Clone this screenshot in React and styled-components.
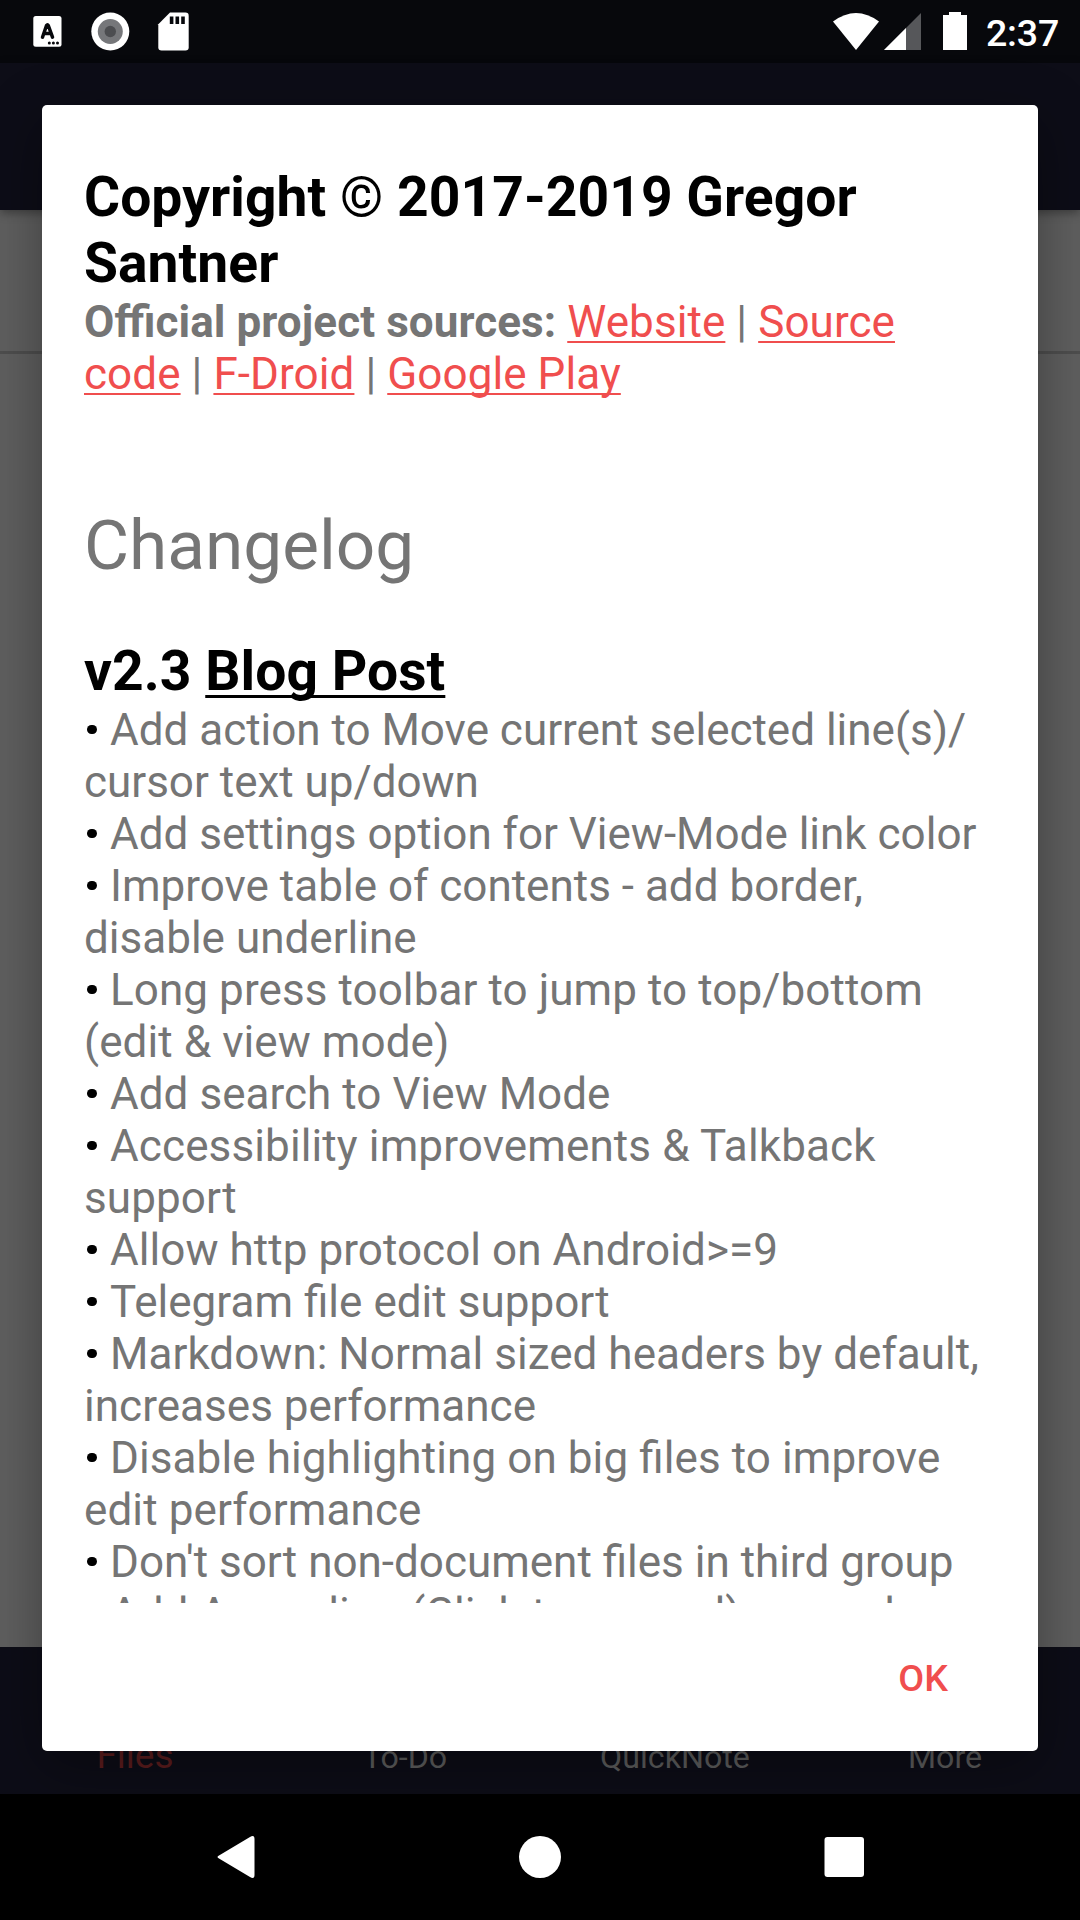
import React from 'react';
import styled, { createGlobalStyle } from 'styled-components';

const Global = createGlobalStyle`
  body { margin: 0; background: #000; font-family: Roboto, "Liberation Sans", sans-serif; }
  * { box-sizing: border-box; }
`;

const Screen = styled.div`
  position: relative;
  width: 1080px;
  height: 1920px;
  display: flex;
  flex-direction: column;
  overflow: hidden;
  background: #5f5f5f;
`;

const StatusBar = styled.header`
  height: 63px;
  flex: none;
  display: flex;
  justify-content: space-between;
  background: #07080c;
  color: #fff;
`;

const StatusIcons = styled.svg`
  display: block;
  height: 63px;
  width: ${(p) => p.$width}px;
`;

const StatusRight = styled.div`
  display: flex;
`;

const Clock = styled.span`
  width: 94px;
  padding-top: 11px;
  font-size: 37.5px;
  font-weight: 500;
  line-height: 44px;
  letter-spacing: -0.2px;
  white-space: nowrap;
`;

const Toolbar = styled.div`
  height: 147px;
  flex: none;
  background: #0d0d17;
  box-shadow: 0 3px 9px rgba(0, 0, 0, 0.35);
`;

const FileArea = styled.div`
  flex: 1;
`;

const PathRow = styled.div`
  height: 144px;
  border-bottom: 3px solid #4e4e4e;
`;

const TabBar = styled.nav`
  height: 147px;
  flex: none;
  display: grid;
  grid-template-columns: repeat(4, 1fr);
  align-items: end;
  background: #0d0d17;
`;

const Tab = styled.span`
  text-align: center;
  padding-bottom: 19px;
  font-size: ${(p) => (p.$active ? 37 : 32.2)}px;
  line-height: ${(p) => (p.$active ? 39 : 35)}px;
  color: ${(p) => (p.$active ? '#5e1d1e' : '#5e5e5e')};
`;

const SystemNav = styled.footer`
  height: 126px;
  flex: none;
  display: flex;
  background: #000;
`;

const Dialog = styled.section`
  position: absolute;
  left: 42px;
  top: 105px;
  width: 996px;
  height: 1646px;
  display: flex;
  flex-direction: column;
  padding: 59px 42px 0;
  border-radius: 5px;
  background: #fff;
  box-shadow: 0 16px 56px rgba(0, 0, 0, 0.36);
`;

const Content = styled.div`
  height: 1439px;
  flex: none;
  overflow: hidden;
  white-space: nowrap;
  color: #757575;
  font-size: 44px;
  line-height: 52px;
  font-feature-settings: "liga" 1;
`;

const Heading = styled.h2`
  margin: 0;
  color: #000;
  font-size: 55.2px;
  font-weight: 700;
  line-height: 66px;
  letter-spacing: 0.05px;
`;

const Sources = styled.p`
  margin: 0;
  letter-spacing: 0.08px;
`;

const Link = styled.a`
  color: #f04e4e;
  text-decoration: underline;
  text-decoration-thickness: 2px;
  text-underline-offset: 4px;
  text-decoration-skip-ink: none;
`;

const PostLink = styled(Link)`
  color: #000;
  text-decoration-thickness: 3px;
  text-underline-offset: 5px;
`;

const SectionTitle = styled.h1`
  margin: 104px 0 51px;
  font-size: 69.3px;
  font-weight: 400;
  line-height: 83px;
`;

const Changes = styled.ul`
  margin: 0;
  padding: 0;
  list-style: none;
`;

const Change = styled.li`
  letter-spacing: ${(p) => p.$tracking}px;
`;

const Bullet = styled.span`
  display: inline-block;
  width: 9.5px;
  height: 9.5px;
  margin: 0 13.5px 0 3px;
  border-radius: 50%;
  background: #000;
  vertical-align: 11px;
`;

const Actions = styled.div`
  flex: 1;
  display: flex;
  justify-content: flex-end;
  padding: 53px 48px 0 0;
`;

const OkButton = styled.button`
  height: 44px;
  padding: 0;
  border: 0;
  background: none;
  color: #f04e4e;
  font-family: inherit;
  font-size: 37.6px;
  font-weight: 500;
  line-height: 44px;
`;

const changes = [
  { lines: ['Add action to Move current selected line(s)/', 'cursor text up/down'], tracking: -0.01 },
  { lines: ['Add settings option for View-Mode link color'], tracking: 0 },
  { lines: ['Improve table of contents - add border,', 'disable underline'], tracking: 0.01 },
  { lines: ['Long press toolbar to jump to top/bottom', '(edit & view mode)'], tracking: 0.08 },
  { lines: ['Add search to View Mode'], tracking: 0.04 },
  { lines: ['Accessibility improvements & Talkback', 'support'], tracking: 0.12 },
  { lines: ['Allow http protocol on Android>=9'], tracking: 0.06 },
  { lines: ['Telegram file edit support'], tracking: 0.03 },
  { lines: ['Markdown: Normal sized headers by default,', 'increases performance'], tracking: 0.04 },
  { lines: ['Disable highlighting on big files to improve', 'edit performance'], tracking: 0.1 },
  { lines: ["Don't sort non-document files in third group"], tracking: 0 },
  { lines: ['Add Accordion (Click to expand) example'], tracking: 0.05 },
];

export default function App() {
  return (
    <Screen>
      <Global />
      <StatusBar>
        <StatusIcons $width={200} viewBox="0 0 200 63">
          <rect x="33.300" y="16" width="28.200" height="30.700" rx="2.500" fill="#fff" />
          <path d="M42.500 37.200 46.500 25.500Q47.500 24 48.300 25.500L52.500 37.200M44.500 33.500h6.500" fill="none" stroke="#07080c" strokeWidth="3.500" strokeLinecap="round" strokeLinejoin="round" />
          <g fill="#07080c">
            <circle cx="49.300" cy="43" r="1.500" />
            <circle cx="53.400" cy="43" r="1.500" />
            <circle cx="57.500" cy="43" r="1.500" />
          </g>
          <circle cx="110.300" cy="31.500" r="19" fill="#fff" />
          <circle cx="110.300" cy="31.500" r="12.500" fill="#76777a" />
          <circle cx="110.300" cy="31.500" r="5.700" fill="#4c4d50" />
          <path d="M170 12.500h15.500a3.200 3.200 0 0 1 3.200 3.200v31.600a3.200 3.200 0 0 1-3.200 3.200h-24a3.200 3.200 0 0 1-3.200-3.200V24.200z" fill="#fff" />
          <path d="M169.800 16.500h3.600v7.500h-3.600zM175.500 16.500h3.600v7.500h-3.600zM181.200 16.500h3.600v7.500h-3.600z" fill="#07080c" />
        </StatusIcons>
        <StatusRight>
          <StatusIcons $width={160} viewBox="826 0 160 63">
            <path d="M833 21.500Q856 4.500 879 21.500L856 50z" fill="#fff" />
            <path d="M921 13v37h-37z" fill="#56575a" />
            <path d="M906 28v22h-22z" fill="#fff" />
            <path d="M949 12h12v3h6v35h-24V15h6z" fill="#fff" />
          </StatusIcons>
          <Clock>2:37</Clock>
        </StatusRight>
      </StatusBar>
      <Toolbar />
      <FileArea>
        <PathRow />
      </FileArea>
      <TabBar>
        <Tab $active>Files</Tab>
        <Tab>To-Do</Tab>
        <Tab>QuickNote</Tab>
        <Tab>More</Tab>
      </TabBar>
      <SystemNav>
        <svg width="1080" height="126" viewBox="0 1794 1080 126" fill="#fff">
          <path d="M219 1855.500 250 1837Q254.500 1834.500 254.500 1839V1875Q254.500 1879.500 250 1877L219 1858.500Q216 1857 219 1855.500z" />
          <circle cx="540" cy="1857" r="21" />
          <rect x="824.500" y="1837" width="39.500" height="40" rx="3" />
        </svg>
      </SystemNav>
      <Dialog>
        <Content>
          <Heading>
            Copyright © 2017-2019 Gregor
            <br />
            Santner
          </Heading>
          <Sources>
            <b>Official project sources:</b> <Link>Website</Link> | <Link>Source</Link>
            <br />
            <Link>code</Link> | <Link>F-Droid</Link> | <Link>Google Play</Link>
          </Sources>
          <SectionTitle>Changelog</SectionTitle>
          <Heading>
            v2.3 <PostLink>Blog Post</PostLink>
          </Heading>
          <Changes>
            {changes.map(({ lines: [first, second], tracking }) => (
              <Change key={first} $tracking={tracking}>
                <Bullet />
                {first}
                {second && <br />}
                {second}
              </Change>
            ))}
          </Changes>
        </Content>
        <Actions>
          <OkButton>OK</OkButton>
        </Actions>
      </Dialog>
    </Screen>
  );
}
